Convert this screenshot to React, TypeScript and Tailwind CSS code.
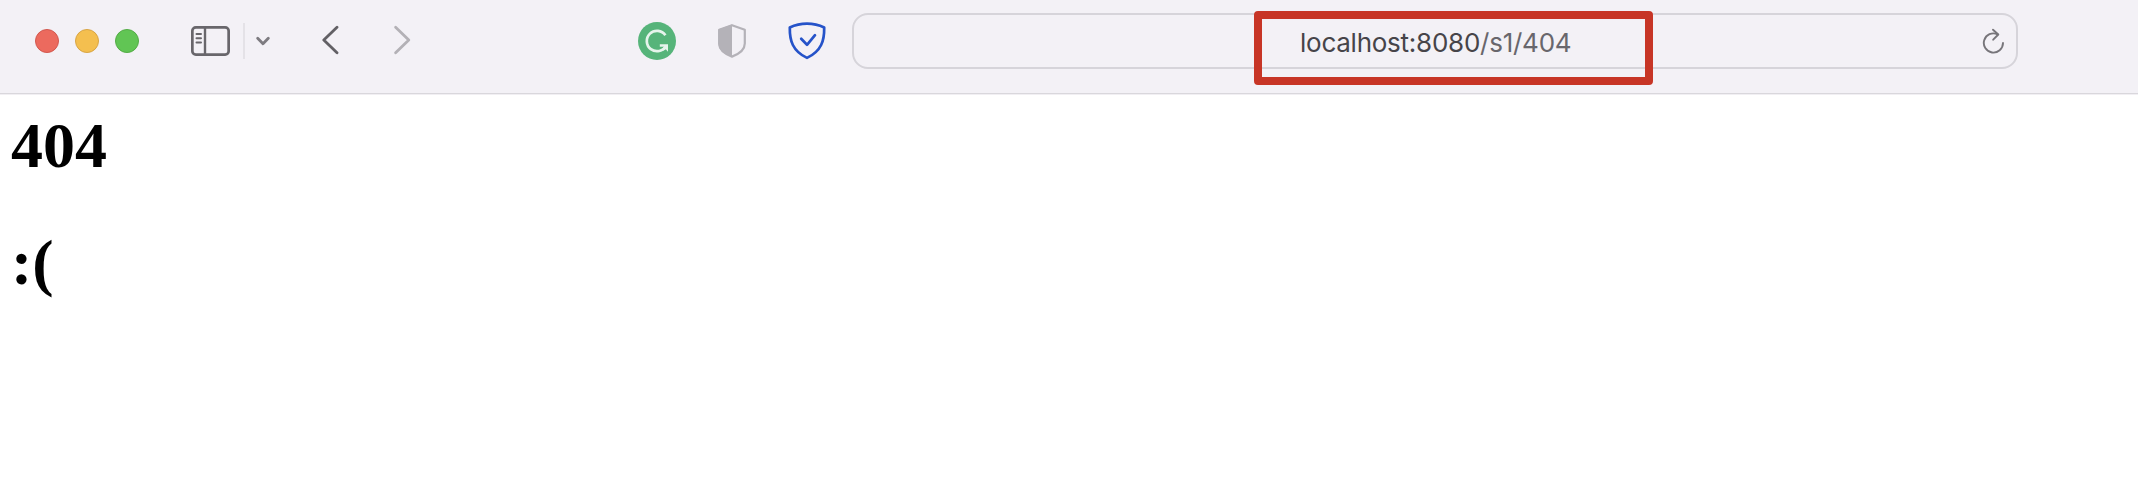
function WindowControls() {
  return (
    <div className="flex gap-4">
      <span className="size-6 rounded-full border border-[#d2584f] bg-[#ec6a5e]" />
      <span className="size-6 rounded-full border border-[#d8a545] bg-[#f4bf4f]" />
      <span className="size-6 rounded-full border border-[#53ac46] bg-[#61c554]" />
    </div>
  );
}

function SidebarIcon() {
  return (
    <svg className="ml-[52px] h-[30px] w-[39px]" viewBox="0 0 39 30" fill="none" stroke="#68666b">
      <rect x="1.35" y="1.35" width="36.3" height="27.3" rx="3.5" strokeWidth="2.7" />
      <path d="M14 1v28" strokeWidth="2.4" />
      <path d="M5.5 8h4.5M5.5 12.2h4.5M5.5 16.6h4.5" strokeWidth="2" strokeLinecap="round" />
    </svg>
  );
}

function Navigation() {
  return (
    <>
      <svg className="ml-[11px] h-[10px] w-[14px]" viewBox="0 0 14 10" fill="none" stroke="#7d7b80" strokeWidth="2.8" strokeLinecap="round" strokeLinejoin="round">
        <path d="M1.7 2.2 7 7.8l5.3-5.6" />
      </svg>
      <svg className="mb-[2px] ml-[52px] h-[30px] w-[18px]" viewBox="0 0 18 30" fill="none" stroke="#626065" strokeWidth="2.8" strokeLinecap="round" strokeLinejoin="round">
        <path d="M15 2.2 1.8 15 15 27.7" />
      </svg>
      <svg className="mb-[2px] ml-[53px] h-[30px] w-[18px]" viewBox="0 0 18 30" fill="none" stroke="#b3b1b6" strokeWidth="2.8" strokeLinecap="round" strokeLinejoin="round">
        <path d="M2.6 2.2 15.8 15 2.6 27.7" />
      </svg>
    </>
  );
}

function Extensions() {
  return (
    <>
      <svg className="ml-[227px] size-[38px]" viewBox="0 0 38 38" fill="none">
        <circle cx="19" cy="19" r="19" fill="#56b47a" />
        <path d="M27.4 13.2A10.2 10.2 0 1 0 28 23.8" stroke="#e6f4ec" strokeWidth="2.7" />
        <path d="M21.8 22.2H30V29.8L27.8 27.2 25.3 28.7 24.2 26.5 26.2 24.7H21.8Z" fill="#e6f4ec" />
      </svg>
      <svg className="ml-[42px] h-[34px] w-[28px]" viewBox="0 0 28 34">
        <path d="M14 1.2 26.8 5.7V19.5C26.8 25.5 20.5 30.2 14 32.6 7.5 30.2 1.2 25.5 1.2 19.5V5.7Z" fill="none" stroke="#b4b2b8" strokeWidth="2.2" strokeLinejoin="round" />
        <path d="M14 .5V33C7 30.7.3 25.7.3 19.5V5.5Z" fill="#b4b2b8" />
      </svg>
      <svg className="ml-[42px] h-[38px] w-[38px]" viewBox="0 0 38 38" fill="none" stroke="#2553c9" strokeWidth="2.7" strokeLinejoin="round" strokeLinecap="round">
        <path d="M19 1.7C25 1.7 31 3 36.2 5.4 36.4 18.5 33.5 29 19 35.9 4.5 29 1.6 18.5 1.8 5.4 7 3 13 1.7 19 1.7Z" />
        <path d="M13.2 16.8 19 22.8 27 13.2" />
      </svg>
    </>
  );
}

function AddressBar() {
  return (
    <div className="ml-[26px] flex h-14 w-[1166px] items-center rounded-2xl border-2 border-[#d6d4da] pr-3">
      <p className="ml-[446px] mt-[3px] whitespace-nowrap font-['Inter','Liberation_Sans',sans-serif] text-[26px] leading-8 tracking-[-0.25px] text-[#68666c]">
        <span className="text-[#464449]">localhost:8080</span>/s1/404
      </p>
      <svg className="ml-auto h-[26px] w-[22px]" viewBox="0 0 22 26" fill="none" stroke="#77757a" strokeWidth="1.9" strokeLinecap="round" strokeLinejoin="round">
        <path d="M21 15A9.6 9.6 0 1 1 15.5 6.3" />
        <path d="M11 1.7 16.3 6.5 11.2 11.7" />
      </svg>
    </div>
  );
}

export default function App() {
  return (
    <div className="h-[504px] overflow-hidden bg-white">
      <header className="relative h-[95px] border-b border-[#f1eff3] bg-[#f3f1f6]">
        <div className="h-[94px] border-b border-[#d9d7dc]">
          <div className="flex h-[82px] items-center pl-[35px]">
            <WindowControls />
            <SidebarIcon />
            <span className="ml-[13px] h-9 w-[2px] bg-[#e4e2e7]" />
            <Navigation />
            <Extensions />
            <AddressBar />
          </div>
        </div>
        <div className="absolute left-[1254px] top-[11px] h-[74px] w-[399px] rounded border-8 border-[#c73526]" />
      </header>
      <main className="pl-[11px] pt-[14px] font-['Liberation_Serif',serif] text-[64px] font-bold leading-[74px] text-black">
        <h1>404</h1>
        <h1 className="mt-[43px]">:(</h1>
      </main>
    </div>
  );
}
